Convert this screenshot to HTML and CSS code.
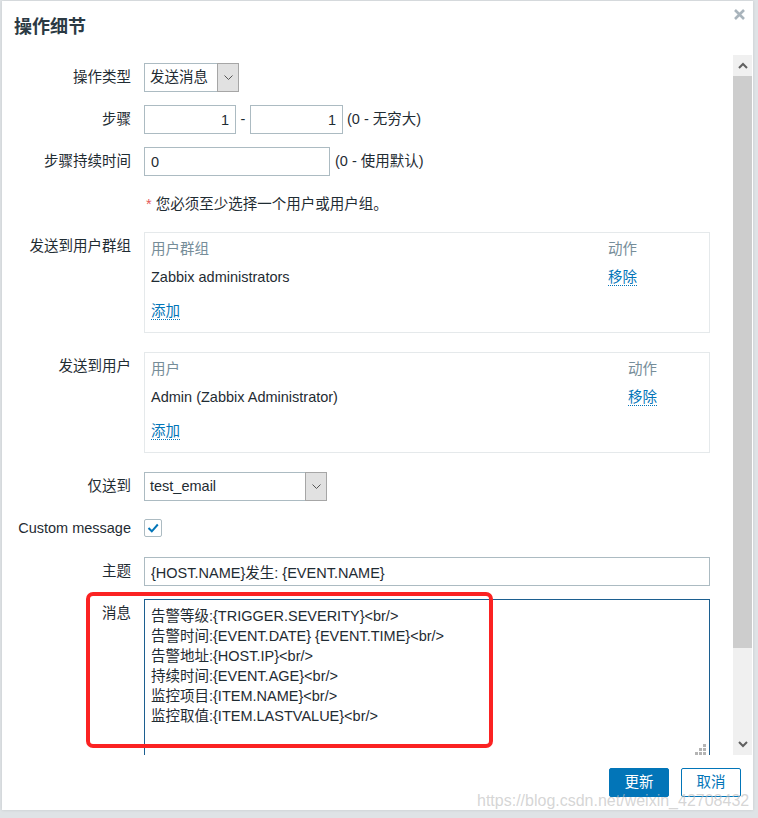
FILE: index.html
```html
<!DOCTYPE html>
<html lang="zh-CN">
<head>
<meta charset="utf-8">
<title>操作细节</title>
<link rel="stylesheet" href="styles.css">
</head>
<body>
<div class="dialog">
  <div class="dlg-head">
    <h4 class="dlg-title">操作细节</h4>
    <button class="dlg-close" aria-label="关闭">
      <svg width="11" height="11" viewBox="0 0 11 11"><path d="M1 1 L10 10 M10 1 L1 10" stroke="#a9b4bc" stroke-width="2.6" fill="none"/></svg>
    </button>
  </div>

  <div class="dlg-body">
    <div class="scroll-content">
      <div class="form">
        <div class="row">
          <div class="lbl">操作类型</div>
          <div class="field">
            <div class="select sel-type">
              <span class="sel-text">发送消息</span>
              <span class="sel-btn"><svg width="9" height="5" viewBox="0 0 9 5"><path d="M0.5 0.5 L4.5 4.5 L8.5 0.5" fill="none" stroke="#555" stroke-width="1"/></svg></span>
            </div>
          </div>
        </div>

        <div class="row">
          <div class="lbl">步骤</div>
          <div class="field">
            <input class="input input-num step-from" type="text" value="1">
            <span class="sep">-</span>
            <input class="input input-num step-to" type="text" value="1">
            <span class="hint">(0 - 无穷大)</span>
          </div>
        </div>

        <div class="row">
          <div class="lbl">步骤持续时间</div>
          <div class="field">
            <input class="input duration" type="text" value="0">
            <span class="hint hint-wide">(0 - 使用默认)</span>
          </div>
        </div>

        <div class="row row-note">
          <div class="lbl"></div>
          <div class="note"><span class="req">*</span>您必须至少选择一个用户或用户组。</div>
        </div>

        <div class="row">
          <div class="lbl">发送到用户群组</div>
          <div class="field">
            <div class="tbl tbl-groups">
              <div class="tbl-row tbl-headrow"><span>用户群组</span><span>动作</span></div>
              <div class="tbl-row"><span>Zabbix administrators</span><span><a class="link">移除</a></span></div>
              <div class="tbl-row tbl-add"><span><a class="link">添加</a></span></div>
            </div>
          </div>
        </div>

        <div class="row row-spaced">
          <div class="lbl">发送到用户</div>
          <div class="field">
            <div class="tbl tbl-users">
              <div class="tbl-row tbl-headrow"><span>用户</span><span>动作</span></div>
              <div class="tbl-row"><span>Admin (Zabbix Administrator)</span><span><a class="link">移除</a></span></div>
              <div class="tbl-row tbl-add"><span><a class="link">添加</a></span></div>
            </div>
          </div>
        </div>

        <div class="row row-spaced">
          <div class="lbl">仅送到</div>
          <div class="field">
            <div class="select sel-media">
              <span class="sel-text">test_email</span>
              <span class="sel-btn"><svg width="9" height="5" viewBox="0 0 9 5"><path d="M0.5 0.5 L4.5 4.5 L8.5 0.5" fill="none" stroke="#555" stroke-width="1"/></svg></span>
            </div>
          </div>
        </div>

        <div class="row">
          <div class="lbl">Custom message</div>
          <div class="field">
            <span class="checkbox"><svg width="16" height="16" viewBox="0 0 16 16"><path d="M3.5 8 L6.8 11.3 L12.8 4.5" fill="none" stroke="#0275b8" stroke-width="2"/></svg></span>
          </div>
        </div>

        <div class="row row-subject">
          <div class="lbl">主题</div>
          <div class="field">
            <input class="input input-full" type="text" value="{HOST.NAME}发生: {EVENT.NAME}">
          </div>
        </div>

        <div class="row">
          <div class="lbl">消息</div>
          <div class="field">
            <div class="ta-wrap">
              <textarea class="textarea" readonly>告警等级:{TRIGGER.SEVERITY}&lt;br/&gt;
告警时间:{EVENT.DATE} {EVENT.TIME}&lt;br/&gt;
告警地址:{HOST.IP}&lt;br/&gt;
持续时间:{EVENT.AGE}&lt;br/&gt;
监控项目:{ITEM.NAME}&lt;br/&gt;
监控取值:{ITEM.LASTVALUE}&lt;br/&gt;</textarea>
              <svg class="grip" width="11" height="11" viewBox="0 0 11 11">
                <rect x="8" y="0" width="3" height="3" fill="#b4b4b4"/>
                <rect x="4" y="4" width="3" height="3" fill="#b4b4b4"/>
                <rect x="8" y="4" width="3" height="3" fill="#b4b4b4"/>
                <rect x="0" y="8" width="3" height="3" fill="#b4b4b4"/>
                <rect x="4" y="8" width="3" height="3" fill="#b4b4b4"/>
                <rect x="8" y="8" width="3" height="3" fill="#b4b4b4"/>
              </svg>
            </div>
          </div>
        </div>
      </div>
    </div>

    <div class="vscroll">
      <div class="sb-btn"><svg width="10" height="7" viewBox="0 0 10 7"><path d="M1 6 L5 2 L9 6" fill="none" stroke="#606060" stroke-width="2"/></svg></div>
      <div class="sb-track"><div class="sb-thumb"></div></div>
      <div class="sb-btn"><svg width="10" height="7" viewBox="0 0 10 7"><path d="M1 1 L5 5 L9 1" fill="none" stroke="#606060" stroke-width="2"/></svg></div>
    </div>
  </div>

  <div class="dlg-foot">
    <button class="btn btn-primary">更新</button>
    <button class="btn btn-alt">取消</button>
  </div>

  <div class="annot"></div>
  <div class="watermark">https://blog.csdn.net/weixin_42708432</div>
</div>
</body>
</html>
```

FILE: styles.css
```css
* { box-sizing: border-box; }

html, body {
  margin: 0;
  padding: 0;
}

body {
  width: 758px;
  height: 818px;
  overflow: hidden;
  background: #dfe3e6;
  font-family: "Liberation Sans", Arial, "Noto Sans CJK SC", sans-serif;
  font-size: 14.5px;
  color: #1f2c33;
}

.dialog {
  position: relative;
  margin: 1px 0 0 2px;
  width: 751px;
  height: 809px;
  background: #fff;
  display: flex;
  flex-direction: column;
  box-shadow: 0 0 3px rgba(0, 0, 0, 0.12);
}

/* header */
.dlg-head {
  height: 54px;
  flex: none;
  display: flex;
  justify-content: space-between;
  align-items: flex-start;
  padding: 0 8px 0 12px;
}

.dlg-title {
  margin: 0;
  font-size: 18px;
  font-weight: bold;
  line-height: 52px;
  color: #2b3a44;
}

.dlg-close {
  display: block;
  margin-top: 8px;
  width: 11px;
  height: 11px;
  padding: 0;
  border: 0;
  background: none;
}
.dlg-close svg { display: block; }

/* body + scrollbar */
.dlg-body {
  height: 700px;
  flex: none;
  display: flex;
}

.scroll-content {
  flex: 1;
  overflow: hidden;
  padding: 8px 23px 0 12px;
}

.vscroll {
  width: 19px;
  margin-right: 1px;
  background: #f0f0f0;
  display: flex;
  flex-direction: column;
}

.sb-btn {
  height: 21px;
  display: flex;
  align-items: center;
  justify-content: center;
}
.sb-btn svg { display: block; }

.sb-track { flex: 1; }

.sb-thumb {
  height: 572px;
  background: #cdcdcd;
}

/* form */
.form {
  display: flex;
  flex-direction: column;
  gap: 13px;
}

.row {
  display: grid;
  grid-template-columns: 117px 1fr;
  column-gap: 13px;
  align-items: start;
}

.row-note { margin-top: 1px; }
.row-spaced { margin-top: 6px; }
.row-subject { margin-top: 1px; }

.lbl {
  text-align: right;
  line-height: 29px;
  white-space: nowrap;
}

.field {
  display: flex;
  align-items: flex-start;
  min-width: 0;
}

.note {
  line-height: 29px;
  white-space: nowrap;
}
.req {
  color: #e45959;
  margin-left: 2px;
  margin-right: 4px;
}

/* inputs */
.input {
  height: 29px;
  border: 1px solid #acbbc2;
  border-radius: 0;
  padding: 0 6px;
  margin: 0;
  font: inherit;
  color: inherit;
  background: #fff;
  line-height: 27px;
  outline: none;
}

.input-num { text-align: right; }
.step-from { width: 92px; }
.step-to { width: 93px; }
.duration { width: 186px; }
.input-full { width: 100%; }

.sep {
  width: 14px;
  text-align: center;
  line-height: 29px;
}

.hint {
  margin-left: 4px;
  line-height: 29px;
  white-space: nowrap;
}
.hint-wide { margin-left: 5px; }

/* selects */
.select {
  display: flex;
  height: 29px;
  border: 1px solid #acbbc2;
  background: #fff;
}
.sel-type { width: 95px; }
.sel-media { width: 183px; }

.sel-text {
  flex: 1;
  padding-left: 5px;
  line-height: 27px;
  white-space: nowrap;
}

.sel-btn {
  width: 22px;
  margin: -1px -1px -1px 0;
  border: 1px solid #a6a6a6;
  background: #e1e1e1;
  display: flex;
  align-items: center;
  justify-content: center;
}
.sel-btn svg { display: block; }

/* tables */
.tbl {
  width: 100%;
  border: 1px solid #e5e9eb;
  padding: 2px 6px 7px;
}

.tbl-row {
  display: grid;
  height: 28px;
  line-height: 28px;
  align-items: center;
  white-space: nowrap;
}
.tbl-groups .tbl-row { grid-template-columns: 1fr 95px; }
.tbl-users .tbl-row { grid-template-columns: 1fr 75px; }

.tbl-headrow { color: #768d99; }
.tbl-add { margin-top: 6px; }

.link {
  color: #0275b8;
  text-decoration: none;
  border-bottom: 1px dotted #0275b8;
  cursor: pointer;
}

/* checkbox */
.checkbox {
  display: flex;
  align-items: center;
  justify-content: center;
  width: 18px;
  height: 18px;
  margin-top: 5px;
  border: 1px solid #acbbc2;
  border-radius: 2px;
  background: #fff;
}
.checkbox svg { display: block; }

/* textarea */
.ta-wrap {
  position: relative;
  width: 100%;
  height: 157px;
}

.textarea {
  display: block;
  width: 100%;
  height: 100%;
  margin: 0;
  padding: 6px 6px;
  border: 1px solid #1c5f90;
  border-radius: 0;
  font: inherit;
  color: inherit;
  line-height: 20px;
  resize: none;
  overflow: hidden;
  outline: none;
  background: #fff;
}

.grip {
  position: absolute;
  right: 4px;
  bottom: 1px;
}

/* footer */
.dlg-foot {
  height: 55px;
  flex: none;
  display: flex;
  justify-content: flex-end;
  gap: 12px;
  padding: 13px 12px 0 0;
}

.btn {
  width: 60px;
  height: 29px;
  padding: 0;
  font: inherit;
  line-height: 27px;
  border: 1px solid #0275b8;
  border-radius: 2px;
}

.btn-primary {
  background: #0275b8;
  color: #fff;
}

.btn-alt {
  background: #fff;
  color: #0275b8;
}

/* overlays */
.annot {
  position: absolute;
  left: 84px;
  top: 591px;
  width: 407px;
  height: 156px;
  border: 4px solid #fb2222;
  border-radius: 7px;
  pointer-events: none;
}

.watermark {
  position: absolute;
  left: 475px;
  top: 791px;
  font-family: "Liberation Sans", Arial, sans-serif;
  font-size: 16px;
  line-height: 18px;
  color: rgba(190, 190, 190, 0.65);
  white-space: nowrap;
  pointer-events: none;
}
```
